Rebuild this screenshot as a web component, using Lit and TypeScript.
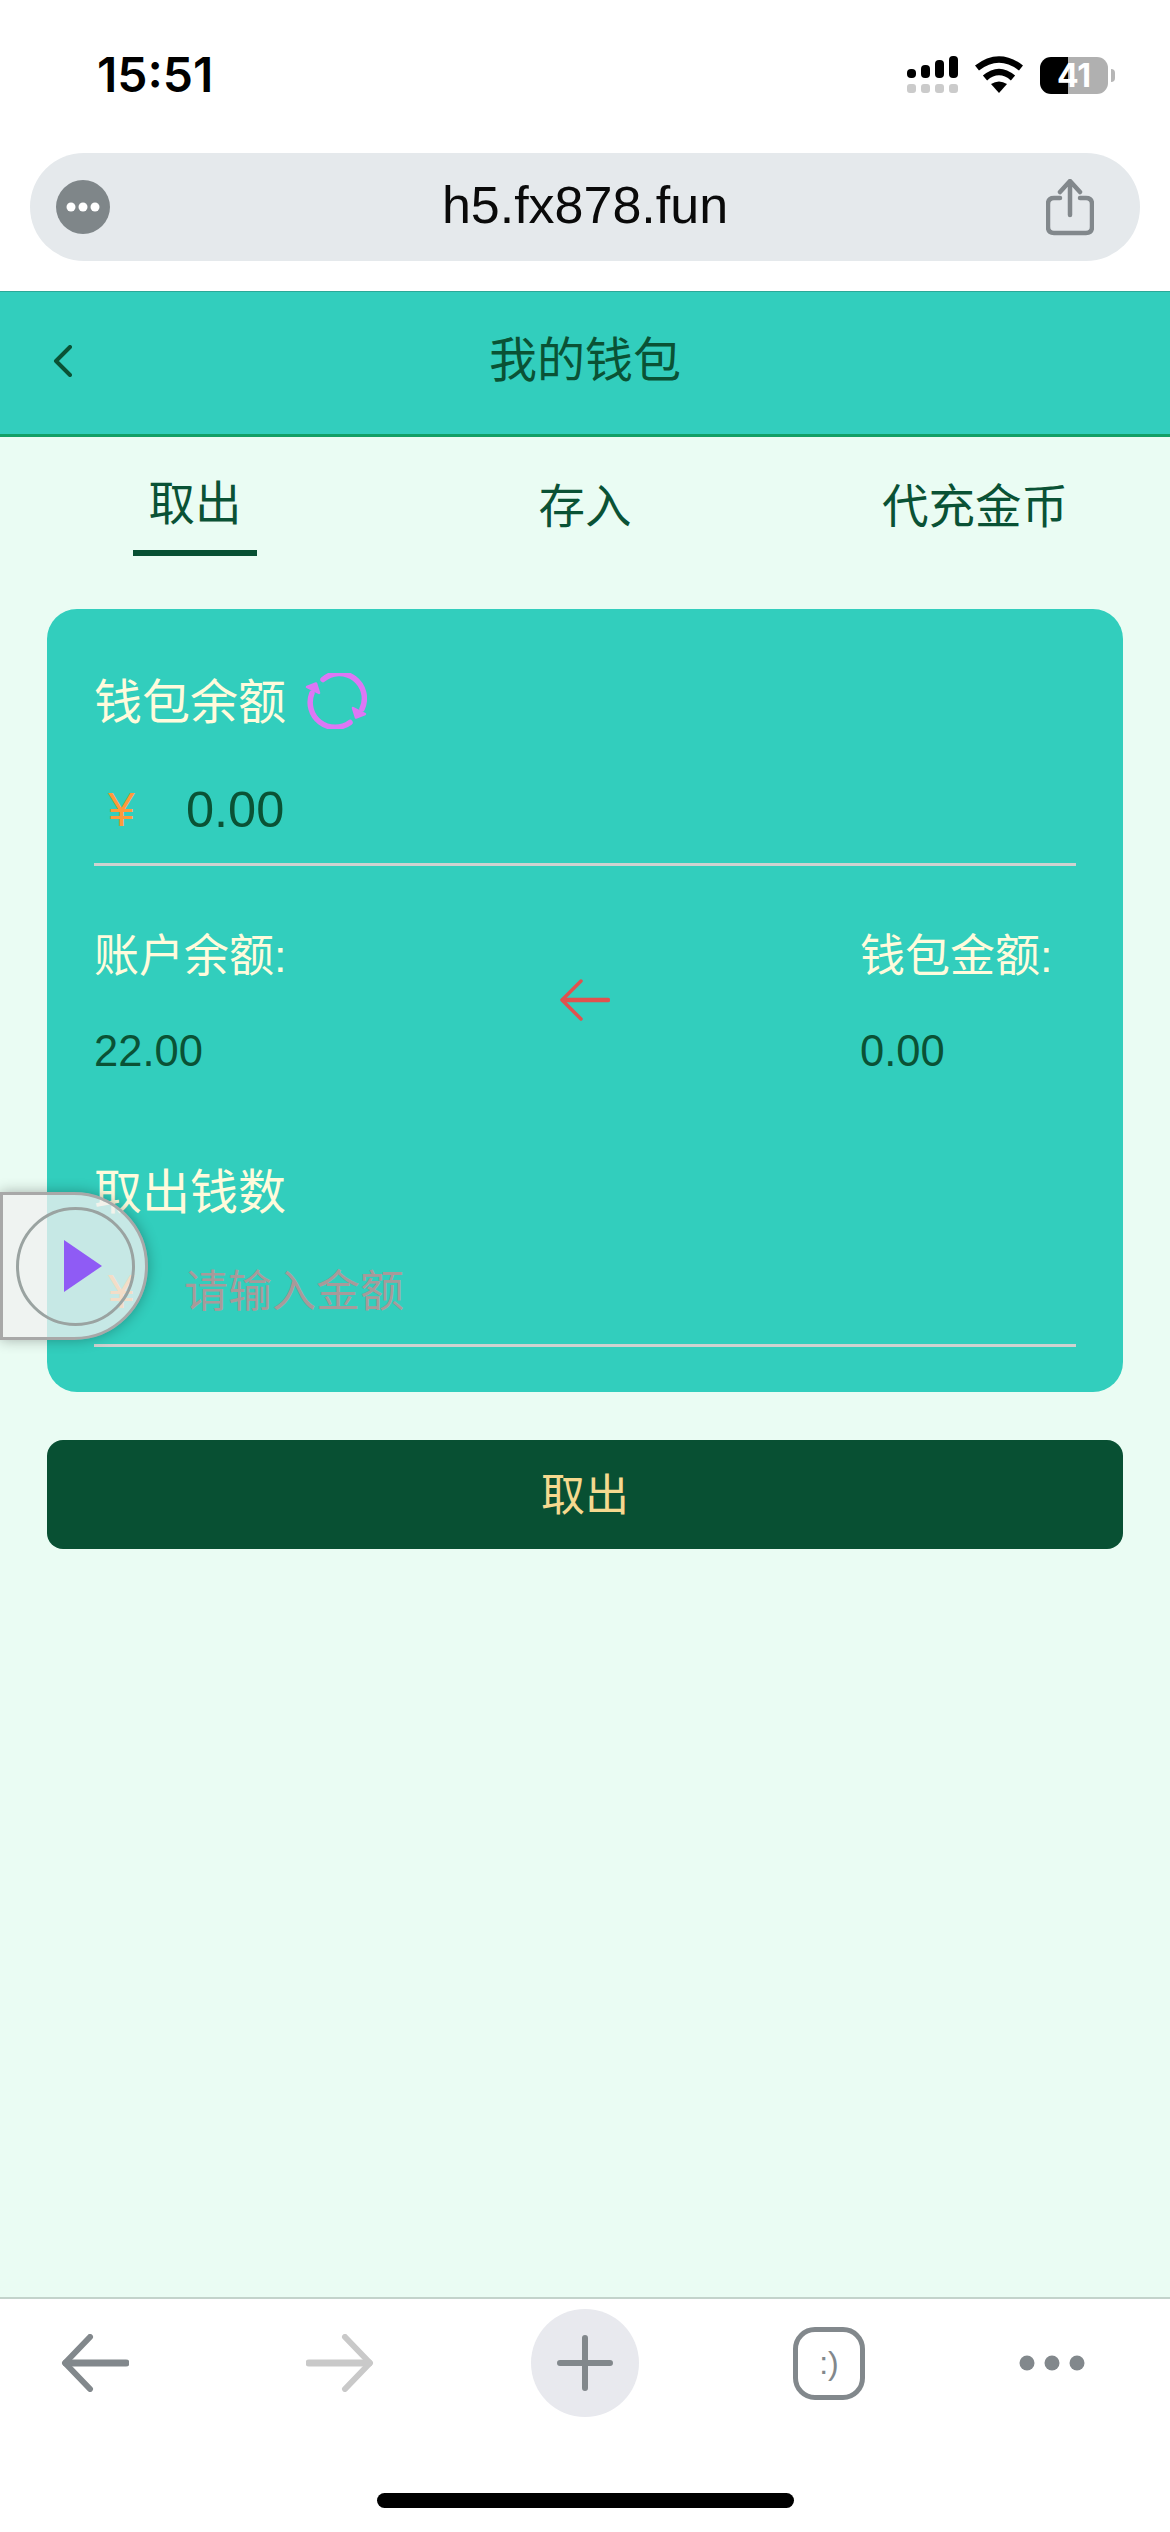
import { LitElement, html, css } from "lit";
import { customElement } from "lit/decorators.js";

@customElement("app-root")
export class AppRoot extends LitElement {
  static styles = css`
    :host { display: block; width: 1170px; font-family: "Liberation Sans", "Noto Sans CJK SC", sans-serif; }
    .root { position: relative; display: flex; flex-direction: column; width: 1170px; height: 2532px; background: #fff; overflow: hidden; }
    svg { display: block; flex: none; }
    .status { height: 150px; box-sizing: border-box; padding: 0 55px 0 97px; display: flex; align-items: center; justify-content: space-between; flex: none; }
    .time { font-family: "Inter", sans-serif; font-weight: 600; font-size: 48px; color: #000; line-height: 50px; }
    .sys { display: flex; align-items: center; }
    .wifi { margin: 0 17px; }
    .battery { width: 68px; height: 37px; border-radius: 11px; background: linear-gradient(90deg, #000 0 28px, #b0b0b0 28px); display: flex; align-items: center; justify-content: center; color: #fff; font-family: "Inter", sans-serif; font-weight: 700; font-size: 32px; line-height: 37px; }
    .nub { margin-left: 3px; width: 4px; height: 13px; background: #b6b6b6; border-radius: 0 4px 4px 0; }
    .url { margin: 3px 30px 30px; height: 108px; border-radius: 54px; background: #e5e9ec; display: flex; align-items: center; justify-content: space-between; padding: 0 46px 0 26px; position: relative; flex: none; }
    .url-text { position: absolute; left: 0; right: 0; top: 22px; text-align: center; font-size: 52px; line-height: 60px; color: #0a0a0a; }
    .header { height: 146px; box-sizing: border-box; flex: none; background: #32cebd; border-top: 1px solid #2ba898; border-bottom: 3px solid #12a066; display: grid; grid-template-columns: 1fr auto 1fr; align-items: center; padding: 0 53px 4px; color: #0a5235; font-size: 48px; line-height: 60px; }
    .main { flex: 1; background: #eafcf3; min-height: 0; }
    .tabs { display: grid; grid-template-columns: repeat(3, 1fr); height: 172px; color: #0a5235; font-size: 46.5px; line-height: 58px; text-align: center; }
    .tab { padding-top: 41px; }
    .tab.on { padding-top: 38px; display: flex; flex-direction: column; align-items: center; }
    .tab.on i { display: block; width: 124px; height: 6px; background: #085033; margin-top: 17px; }
    .card { margin: 0 47px; height: 783px; box-sizing: border-box; padding: 64px 47px 0; background: #32cebd; border-radius: 30px; }
    .label { color: #fffbdc; font-size: 48px; line-height: 60px; }
    .title { display: flex; align-items: center; gap: 19px; height: 60px; }
    .title svg { margin-bottom: 4px; }
    .field { margin-top: 23px; height: 110px; box-sizing: border-box; border-bottom: 3px solid #cfd2d0; display: flex; align-items: center; }
    .yen { width: 92px; padding-left: 14px; box-sizing: border-box; font-size: 48px; color: #ff9a3a; line-height: 60px; }
    .amount { font-size: 50.5px; line-height: 60px; color: #0a5235; }
    .ph { font-size: 44px; line-height: 60px; color: #a89a9a; }
    .balances { margin-top: 61px; display: grid; grid-template-columns: 1fr auto 1fr; align-items: center; }
    .col.right { justify-self: end; width: 216px; }
    .sm { font-size: 45px; line-height: 60px; color: #fffbdc; white-space: nowrap; }
    .val { margin-top: 34px; font-size: 43.5px; line-height: 60px; color: #0a5235; }
    .arrow { margin-bottom: 8px; }
    .withdraw { margin-top: 82px; }
    .field.second { margin-top: 11px; height: 113px; padding-top: 6px; }
    .field.second .yen { width: 90px; }
    .btn { margin: 48px 47px 0; height: 109px; box-sizing: border-box; padding-bottom: 5px; border-radius: 16px; background: #085033; color: #f5d98f; font-size: 44px; display: flex; align-items: center; justify-content: center; }
    .float { position: absolute; left: 0; top: 1192px; width: 148px; height: 148px; box-sizing: border-box; border: 3px solid #a8a8a8; border-radius: 0 74px 74px 0; background: rgba(240,240,240,.78); box-shadow: 0 0 14px rgba(0,0,0,.3); display: flex; align-items: center; justify-content: center; padding: 0 4px 0 6px; }
    .ring { width: 119px; height: 119px; box-sizing: border-box; border: 3px solid #9aa3a1; border-radius: 50%; display: flex; align-items: center; justify-content: center; padding-left: 15px; }
    .bar { flex: none; height: 235px; box-sizing: border-box; background: #fff; border-top: 2px solid #c3d3cb; padding-top: 10px; display: flex; flex-direction: column; align-items: center; }
    .icons { width: 100%; height: 108px; display: grid; grid-template-columns: 190px 300px 190px 298px 148px; justify-items: center; align-items: center; }
    .plus { width: 108px; height: 108px; border-radius: 50%; background: #e8e9ee; display: flex; align-items: center; justify-content: center; }
    .tabs-ico { width: 72px; height: 73px; box-sizing: border-box; border: 5.5px solid #82888c; border-radius: 22px; color: #82888c; font-size: 32px; line-height: 60px; display: flex; align-items: center; justify-content: center; }
    .home { margin-top: 76px; width: 417px; height: 15px; border-radius: 8px; background: #000; }
  `;

  render() {
    return html`
      <div class="root">
        <div class="status">
          <div class="time">15:51</div>
          <div class="sys">
            <svg width="51" height="38" viewBox="0 0 51 38" fill="#000">
              <rect x="0" y="13" width="9" height="9" rx="4"/><rect x="14" y="9" width="9" height="13" rx="4"/><rect x="28" y="4" width="9" height="18" rx="4"/><rect x="42" y="0" width="9" height="22" rx="4"/>
              <g fill="#cbcbcb"><rect x="0" y="28" width="9" height="9" rx="3"/><rect x="14" y="28" width="9" height="9" rx="3"/><rect x="28" y="28" width="9" height="9" rx="3"/><rect x="42" y="28" width="9" height="9" rx="3"/></g>
            </svg>
            <svg class="wifi" width="48" height="38" viewBox="0 0 48 38">
              <path d="M2 12Q24 -5 46 12" fill="none" stroke="#000" stroke-width="6.5"/>
              <path d="M10 22Q24 10 38 22" fill="none" stroke="#000" stroke-width="6.5"/>
              <path d="M24 37L16 28Q24 23 32 28Z" fill="#000"/>
            </svg>
            <div class="battery">41</div>
            <div class="nub"></div>
          </div>
        </div>
        <div class="url">
          <svg width="54" height="54" viewBox="0 0 54 54">
            <circle cx="27" cy="27" r="27" fill="#7f8689"/>
            <circle cx="15" cy="27" r="4.5" fill="#fff"/><circle cx="27" cy="27" r="4.5" fill="#fff"/><circle cx="39" cy="27" r="4.5" fill="#fff"/>
          </svg>
          <div class="url-text">h5.fx878.fun</div>
          <svg width="48" height="57" viewBox="0 0 48 57" fill="none" stroke="#82888c" stroke-width="4.5" stroke-linecap="round" stroke-linejoin="round">
            <path d="M14 19H8Q2 19 2 25V48Q2 54 8 54H40Q46 54 46 48V25Q46 19 40 19H34"/>
            <path d="M24 36V3M14 13L24 2L34 13"/>
          </svg>
        </div>
        <div class="header">
          <svg width="19" height="32" viewBox="0 0 19 32" fill="none" stroke="#0a5235" stroke-width="4" stroke-linecap="round" stroke-linejoin="round"><path d="M17 2L3 16L17 30"/></svg>
          <div>我的钱包</div>
          <div></div>
        </div>
        <div class="main">
          <div class="tabs">
            <div class="tab on"><span>取出</span><i></i></div>
            <div class="tab">存入</div>
            <div class="tab">代充金币</div>
          </div>
          <div class="card">
            <div class="title label">
              <span>钱包余额</span>
              <svg width="62" height="56" viewBox="0 0 62 56" fill="none" stroke="#dd77f5" stroke-width="5.5" stroke-linecap="round">
                <path d="M18 6.5A25 25 0 0 1 57 36"/>
                <path d="M45 49.5A25 25 0 0 1 7 20"/>
                <path d="M2 14L11 10.5L14 20Z" fill="#dd77f5" stroke-width="2.5" stroke-linejoin="round"/>
                <path d="M60 41L51 44.5L48 35Z" fill="#dd77f5" stroke-width="2.5" stroke-linejoin="round"/>
              </svg>
            </div>
            <div class="field">
              <span class="yen">¥</span>
              <span class="amount">0.00</span>
            </div>
            <div class="balances">
              <div class="col">
                <div class="sm">账户余额:</div>
                <div class="val">22.00</div>
              </div>
              <svg class="arrow" width="50" height="42" viewBox="0 0 50 42" fill="none" stroke="#e0524f" stroke-linecap="round" stroke-linejoin="round">
                <path d="M21 2L2 21L21 40" stroke-width="3.5"/>
                <path d="M3 21H48" stroke-width="4.5"/>
              </svg>
              <div class="col right">
                <div class="sm">钱包金额:</div>
                <div class="val">0.00</div>
              </div>
            </div>
            <div class="label withdraw">取出钱数</div>
            <div class="field second">
              <span class="yen">¥</span>
              <span class="ph">请输入金额</span>
            </div>
          </div>
          <div class="btn">取出</div>
        </div>
        <div class="float">
          <div class="ring">
            <svg width="38" height="52" viewBox="0 0 38 52"><path d="M0 0L38 26L0 52Z" fill="#8f5bf5"/></svg>
          </div>
        </div>
        <div class="bar">
          <div class="icons">
            <svg width="68" height="58" viewBox="0 0 68 58" fill="none" stroke="#82888c" stroke-linecap="round" stroke-linejoin="round">
              <path d="M29 3L4 29L29 55" stroke-width="6"/>
              <path d="M5 29H65" stroke-width="7"/>
            </svg>
            <svg width="68" height="58" viewBox="0 0 68 58" fill="none" stroke="#c9c9c9" stroke-linecap="round" stroke-linejoin="round">
              <path d="M39 3L64 29L39 55" stroke-width="6"/>
              <path d="M3 29H63" stroke-width="7"/>
            </svg>
            <div class="plus">
              <svg width="56" height="56" viewBox="0 0 56 56" stroke="#82888c" stroke-width="6" stroke-linecap="round"><path d="M3 28H53M28 3V53"/></svg>
            </div>
            <div class="tabs-ico">:)</div>
            <svg width="66" height="16" viewBox="0 0 66 16" fill="#82888c"><circle cx="8" cy="8" r="7.5"/><circle cx="33" cy="8" r="7.5"/><circle cx="58" cy="8" r="7.5"/></svg>
          </div>
          <div class="home"></div>
        </div>
      </div>
    `;
  }
}
